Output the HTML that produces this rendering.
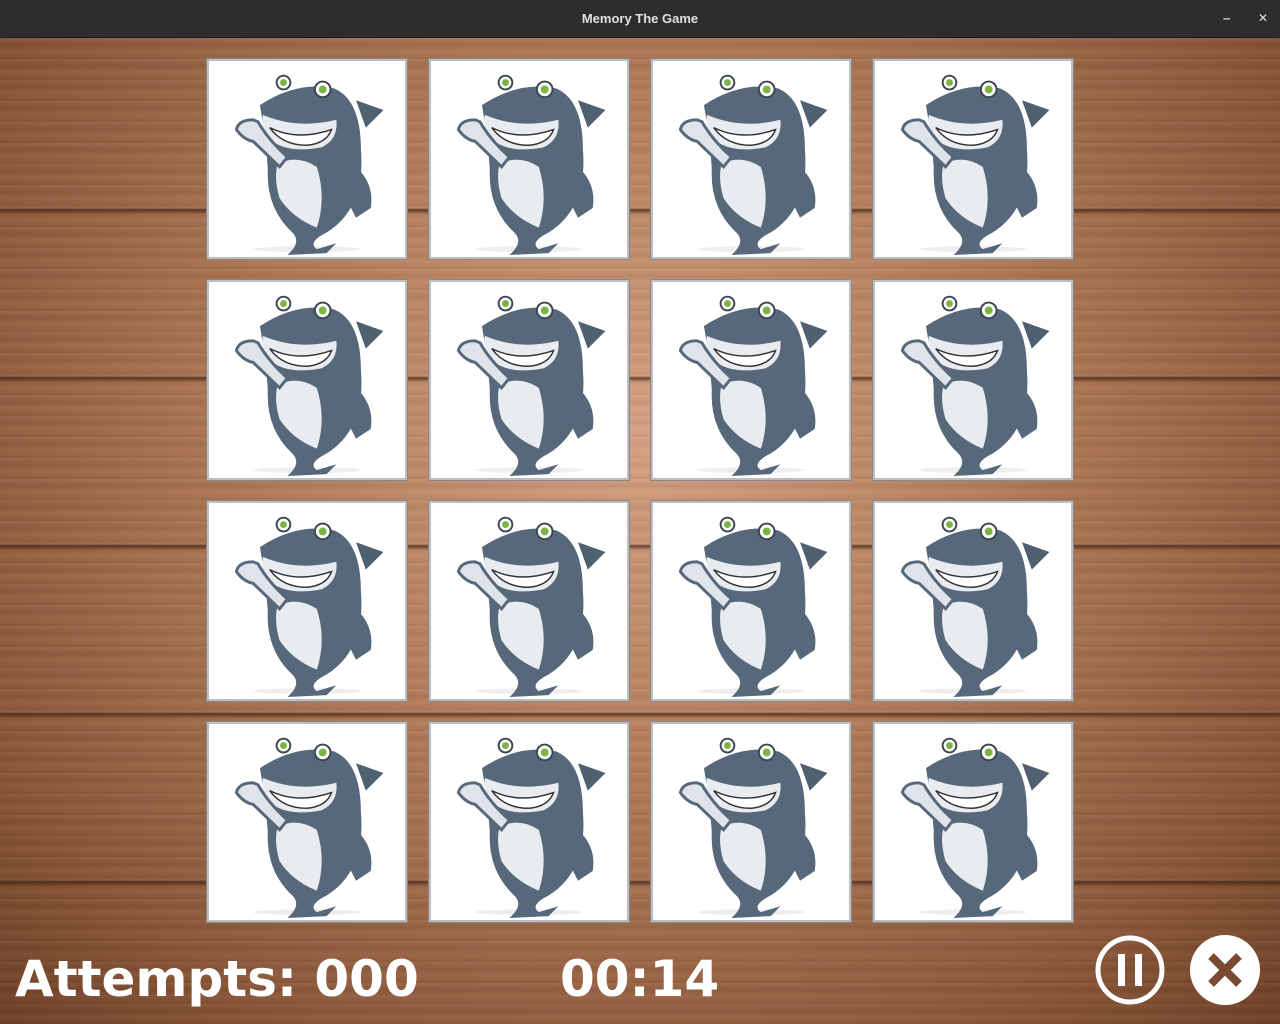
<!DOCTYPE html>
<html><head><style>
body{margin:0;width:1280px;height:1024px;overflow:hidden;font-family:"Liberation Sans",sans-serif}
.tb{position:absolute;top:0;left:0;width:1280px;height:37px;background:#2d2d2d;color:#e0e0e0;font-size:13px;font-weight:bold;text-align:center;line-height:37px;border-bottom:1px solid #1a1a1a}
.tb .c{position:absolute;right:12px;top:0;font-size:12px;font-weight:normal}
.tb .m{position:absolute;right:50px;top:0;font-size:12px}
.bg{position:absolute;top:38px;left:0;width:1280px;height:986px;
background:
linear-gradient(180deg,transparent 0,transparent 170px,rgba(60,30,15,.7) 172px,transparent 176px,transparent 338px,rgba(60,30,15,.7) 340px,transparent 344px,transparent 506px,rgba(60,30,15,.7) 508px,transparent 512px,transparent 674px,rgba(60,30,15,.7) 676px,transparent 680px,transparent 842px,rgba(60,30,15,.7) 844px,transparent 848px),
repeating-linear-gradient(180deg,rgba(255,255,255,.05) 0,rgba(0,0,0,.06) 7px,rgba(255,255,255,.04) 13px,rgba(0,0,0,.05) 21px),
radial-gradient(ellipse at 50% 40%,#d7a383 0%,#b47d5a 40%,#8a5637 80%,#6e3f25 100%)}
.card{position:absolute;width:196px;height:196px;background:#fff;border:2px solid #bdbdbd;box-shadow:0 0 0 1px #888}
.card svg{width:196px;height:196px}
.t{position:absolute;color:#fff;font-weight:bold;font-size:50px;top:950px;font-family:"DejaVu Sans",sans-serif}
</style></head><body>
<div class="tb">Memory The Game<span class="m">‒</span><span class="c">✕</span></div>
<div class="bg"></div>
<svg width="0" height="0" style="position:absolute"><defs>
<g id="sh">
<ellipse cx="100" cy="192" rx="55" ry="3" fill="#eee"/>
<path d="M150 40 L178 50 L160 68 Z" fill="#4f6070"/>
<path d="M52 45 Q90 20 128 28 Q155 40 155 90 Q160 150 120 175 Q100 185 110 192 L130 186 L120 196 L80 198 Q95 185 85 175 Q58 150 60 110 Q58 80 52 45 Z" fill="#56687a"/>
<path d="M70 105 Q90 95 110 108 Q120 140 110 170 Q85 160 72 140 Q66 120 70 105 Z" fill="#e8ecf0"/>
<path d="M55 55 Q90 70 130 60 Q132 80 115 88 Q80 95 62 80 Q52 68 55 55 Z" fill="#e8ecf0"/>
<path d="M62 68 Q90 82 125 70 Q120 84 100 86 Q75 86 62 68 Z" fill="#fff" stroke="#333" stroke-width="1.5"/>
<path d="M45 60 Q30 60 28 70 Q35 80 45 82 L72 108 L80 98 Q60 80 50 62 Z" fill="#dfe4ea" stroke="#56687a" stroke-width="3"/>
<path d="M140 100 Q170 120 165 150 L150 160 L140 140 Z" fill="#56687a"/>
<circle cx="76" cy="22" r="7" fill="#fff" stroke="#3b4650" stroke-width="2"/><circle cx="76" cy="22" r="3.5" fill="#7cb342"/>
<circle cx="116" cy="29" r="8" fill="#fff" stroke="#3b4650" stroke-width="2"/><circle cx="116" cy="29" r="4" fill="#7cb342"/>
</g></defs></svg>
<div id="g"></div>
<script>
var h='';for(var r=0;r<4;r++)for(var c=0;c<4;c++){h+='<div class="card" style="left:'+(207+c*222)+'px;top:'+(59+r*221)+'px"><svg viewBox="0 0 200 200"><use href="#sh"/></svg></div>';}
document.getElementById('g').innerHTML=h;
</script>
<div class="t" style="left:15px">Attempts: 000</div>
<div class="t" style="left:560px">00:14</div>
<svg style="position:absolute;left:1094px;top:934px" width="72" height="72"><circle cx="36" cy="36" r="32" fill="none" stroke="#fff" stroke-width="5"/><rect x="24" y="20" width="7" height="32" fill="#fff"/><rect x="41" y="20" width="7" height="32" fill="#fff"/></svg>
<svg style="position:absolute;left:1189px;top:934px" width="72" height="72"><circle cx="36" cy="36" r="35" fill="#fff"/><path d="M22 22 L50 50 M50 22 L22 50" stroke="#7a4a30" stroke-width="8"/></svg>
</body></html>
